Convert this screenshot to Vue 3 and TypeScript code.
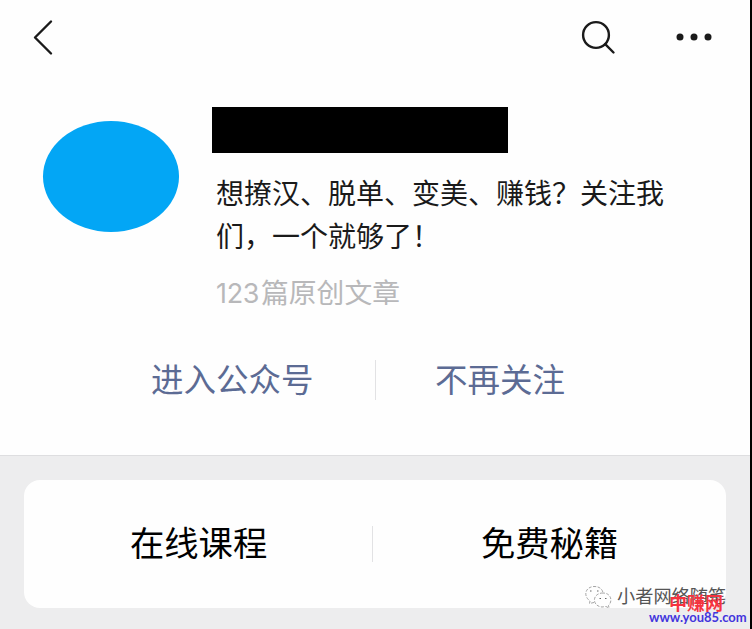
<script setup lang="ts">
interface Profile {
  bio: string[];
  articles: string;
}

const profile: Profile = {
  bio: ["想撩汉、脱单、变美、赚钱？关注我", "们，一个就够了！"],
  articles: "篇原创文章",
};

const articleCount = 123;
const actions = ["进入公众号", "不再关注"];
const menus = ["在线课程", "免费秘籍"];
</script>

<template>
  <div class="page">
    <header class="nav">
      <svg class="back" viewBox="0 0 24 40" fill="none">
        <path d="M19 4.5 3 20.5 19 36.5" />
      </svg>
      <svg class="search" viewBox="0 0 40 40" fill="none">
        <circle cx="18" cy="18" r="12.9" />
        <path d="M27.2 27.2 35.5 35.5" />
      </svg>
      <svg class="more" viewBox="0 0 40 10">
        <circle cx="6" cy="5" r="3.5" />
        <circle cx="20" cy="5" r="3.5" />
        <circle cx="34" cy="5" r="3.5" />
      </svg>
    </header>

    <section class="profile">
      <div class="avatar"></div>
      <div class="info">
        <div class="name"></div>
        <p class="bio">
          <span v-for="line in profile.bio" :key="line" class="bio-line">{{ line }}</span>
        </p>
        <p class="count"><span class="digits">{{ articleCount }}</span>{{ profile.articles }}</p>
      </div>
    </section>

    <div class="actions">
      <a class="action enter">{{ actions[0] }}</a>
      <i class="divider"></i>
      <a class="action unfollow">{{ actions[1] }}</a>
    </div>

    <main class="content">
      <div class="card">
        <a class="menu online">{{ menus[0] }}</a>
        <i class="divider"></i>
        <a class="menu free">{{ menus[1] }}</a>
      </div>
    </main>

    <div class="account">
      <svg class="wechat" viewBox="0 0 28 24" fill="none">
        <path class="bubble" d="M10 17.5 5.5 18.5 6 16C-1 11 1 2 10 1.5 15 1.3 18.5 4 19 8" />
        <path class="bubble" d="M19 8C8 8 7.5 21 18 22L22 21.5 25 23 24.5 20.5C29 16 27 8 19 8Z" />
        <path class="eyes" d="M6 6h1.5M13 6h1.5M15.5 13.5h1.5M21 13.5h1.5" />
      </svg>
      <span>小者网络随笔</span>
    </div>
    <div class="site">
      <div class="site-name">中赚网</div>
      <div class="site-url">www.you85.com</div>
    </div>
  </div>
</template>

<style>
body {
  margin: 0;
}
</style>

<style scoped>
.page {
  position: relative;
  box-sizing: border-box;
  width: 752px;
  height: 629px;
  overflow: hidden;
  display: flex;
  flex-direction: column;
  background: #fefefe;
  border-right: 2px solid #000;
  font-family: "Liberation Sans", "Noto Sans CJK SC", sans-serif;
  color: #1a1a1a;
}

p {
  margin: 0;
}

.nav {
  display: flex;
  align-items: center;
  height: 74px;
  padding: 0 36px 0 32px;
}

.nav svg {
  stroke: #1a1a1a;
  stroke-width: 2.4;
  stroke-linecap: round;
  stroke-linejoin: round;
}

.back {
  width: 24px;
  height: 40px;
  margin-bottom: 1px;
}

.search {
  width: 40px;
  height: 40px;
  margin-left: auto;
  margin-right: 56px;
}

.nav .more {
  width: 40px;
  height: 10px;
  fill: #1a1a1a;
  stroke: none;
}

.profile {
  display: flex;
  height: 286px;
  box-sizing: border-box;
  padding: 33px 0 0 43px;
}

.avatar {
  width: 136px;
  height: 111px;
  margin-top: 14px;
  border-radius: 50%;
  background: #03a6f5;
}

.info {
  margin-left: 33px;
}

.name {
  width: 296px;
  height: 46px;
  background: #000;
}

.bio {
  margin: 18px 0 0 4px;
  font-family: "Noto Sans CJK SC", sans-serif;
  font-size: 28px;
  line-height: 43px;
}

.bio-line {
  display: block;
  white-space: nowrap;
}

.count {
  margin: 17px 0 0 4px;
  font-size: 27.8px;
  line-height: 40px;
  color: #b8b8ba;
}

.digits {
  display: inline-block;
  width: 45px;
  font-family: Inter, "Liberation Sans", sans-serif;
  font-size: 27px;
  letter-spacing: -0.3px;
}

.actions {
  display: flex;
  align-items: center;
  height: 40px;
}

.action {
  font-size: 32.5px;
  line-height: 40px;
  padding-top: 2px;
  color: #5c6b94;
  white-space: nowrap;
}

.enter {
  width: 224px;
  margin-left: 151px;
}

.unfollow {
  margin-left: 59px;
}

.divider {
  width: 1px;
  height: 40px;
  background: #e2e2e4;
}

.content {
  flex: 1;
  margin-top: 55px;
  border-top: 1px solid #dedee0;
  background: #ededee;
}

.card {
  display: flex;
  align-items: center;
  box-sizing: border-box;
  width: 702px;
  height: 128px;
  margin: 24px 0 0 24px;
  border-radius: 16px;
  background: #fefefe;
}

.menu {
  font-size: 34.3px;
  line-height: 48px;
  color: #000;
  white-space: nowrap;
}

.online {
  width: 242px;
  margin-left: 106px;
}

.free {
  margin-left: 108px;
}

.card .divider {
  height: 36px;
}

/* overlaid signatures in the corner */
.account {
  position: absolute;
  left: 584px;
  top: 584px;
  display: flex;
  align-items: center;
  gap: 5px;
  font-size: 18.2px;
  line-height: 26px;
  color: #555;
  white-space: nowrap;
}

.wechat {
  width: 28px;
  height: 24px;
}

.bubble {
  fill: #fefefe;
  stroke: #999;
  stroke-width: 0.9;
  stroke-dasharray: 3 1.5;
}

.eyes {
  stroke: #666;
  stroke-width: 1.2;
}

.site {
  position: absolute;
  left: 649px;
  top: 593px;
  white-space: nowrap;
}

.site-name {
  margin-left: 20px;
  font-size: 18px;
  line-height: 22px;
  font-weight: 700;
  color: #f5333f;
}

.site-url {
  margin-top: -5px;
  font-family: Lato, "Open Sans", sans-serif;
  font-size: 13px;
  line-height: 14px;
  font-weight: 700;
  color: #4335dd;
}
</style>
